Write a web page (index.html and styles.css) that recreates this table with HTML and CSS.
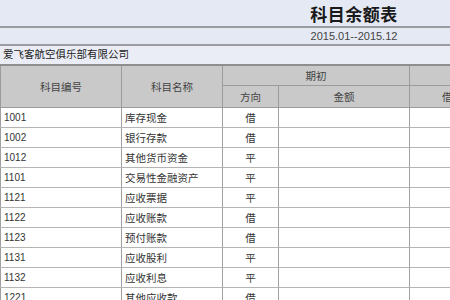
FILE: index.html
```html
<!DOCTYPE html>
<html lang="zh">
<head>
<meta charset="utf-8">
<link rel="stylesheet" href="styles.css">
</head>
<body>
<div class="sheet">
  <div class="band title">科目余额表</div>
  <div class="band date">2015.01--2015.12</div>
  <div class="band company">爱飞客航空俱乐部有限公司</div>
  <table class="grid">
    <colgroup>
      <col class="c1"><col class="c2"><col class="c3"><col class="c4"><col class="c5"><col class="c6">
    </colgroup>
    <thead>
      <tr class="h1">
        <th rowspan="2">科目编号</th>
        <th rowspan="2">科目名称</th>
        <th colspan="2">期初</th>
        <th colspan="2"></th>
      </tr>
      <tr class="h2">
        <th>方向</th>
        <th>金额</th>
        <th>借方</th>
        <th>贷方</th>
      </tr>
    </thead>
    <tbody>
      <tr><td class="code">1001</td><td class="name">库存现金</td><td class="dir">借</td><td></td><td></td><td></td></tr>
      <tr><td class="code">1002</td><td class="name">银行存款</td><td class="dir">借</td><td></td><td></td><td></td></tr>
      <tr><td class="code">1012</td><td class="name">其他货币资金</td><td class="dir">平</td><td></td><td></td><td></td></tr>
      <tr><td class="code">1101</td><td class="name">交易性金融资产</td><td class="dir">平</td><td></td><td></td><td></td></tr>
      <tr><td class="code">1121</td><td class="name">应收票据</td><td class="dir">平</td><td></td><td></td><td></td></tr>
      <tr><td class="code">1122</td><td class="name">应收账款</td><td class="dir">借</td><td></td><td></td><td></td></tr>
      <tr><td class="code">1123</td><td class="name">预付账款</td><td class="dir">借</td><td></td><td></td><td></td></tr>
      <tr><td class="code">1131</td><td class="name">应收股利</td><td class="dir">平</td><td></td><td></td><td></td></tr>
      <tr><td class="code">1132</td><td class="name">应收利息</td><td class="dir">平</td><td></td><td></td><td></td></tr>
      <tr><td class="code">1221</td><td class="name">其他应收款</td><td class="dir">借</td><td></td><td></td><td></td></tr>
    </tbody>
  </table>
</div>
</body>
</html>
```
FILE: styles.css
```css
html, body {
  margin: 0;
  padding: 0;
  background: #ffffff;
  overflow: hidden;
}
.sheet {
  width: 708px;
  font-family: "Noto Sans CJK SC", "Liberation Sans", sans-serif;
  color: #333;
}
.band {
  background: #e5e9f4;
  border-bottom: 2px solid #9a9ca2;
  box-sizing: border-box;
}
.title {
  height: 28px;
  font-size: 17px;
  font-weight: bold;
  color: #1a1a1a;
  text-align: center;
  line-height: 28px;
  letter-spacing: 0.5px;
}
.date {
  height: 18px;
  font-family: "Liberation Sans", sans-serif;
  font-size: 11px;
  line-height: 16px;
  text-align: center;
  color: #444;
}
.company {
  height: 18px;
  font-size: 10.5px;
  line-height: 16px;
  padding-left: 3px;
  background: #eaedf6;
  color: #222;
  border-bottom: none;
}
.grid {
  border-collapse: collapse;
  table-layout: fixed;
  width: 708px;
}
.c1 { width: 121px; }
.c2 { width: 101px; }
.c3 { width: 56px; }
.c4 { width: 131px; }
.c5 { width: 86px; }
.c6 { width: 213px; }
.grid th {
  background: #c9c9c9;
  border: 1px solid #9c9c9c;
  font-weight: normal;
  font-size: 10.5px;
  color: #444;
  padding: 0;
}
.grid thead tr:first-child th {
  border-top: 2px solid #8e8e8e;
}
.h1 th { height: 19px; }
.h2 th { height: 21px; }
.grid td {
  border: 1px solid #b4b4b4;
  border-left-color: #a0a0a0;
  border-right-color: #a0a0a0;
  height: 19px;
  padding: 0;
  font-size: 10.5px;
  color: #333;
}
.grid td.code {
  font-family: "Liberation Sans", sans-serif;
  font-size: 10px;
  padding-left: 3px;
}
.grid td.name { padding-left: 3px; }
.grid td.dir { text-align: center; }
```
